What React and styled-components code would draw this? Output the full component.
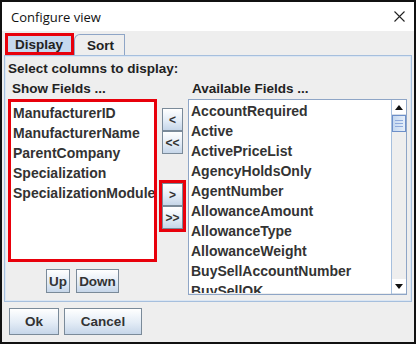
import styled, { createGlobalStyle } from 'styled-components';

const GlobalStyle = createGlobalStyle`
    body {
        margin: 0;
        background: #ffffff;
        font-family: 'Liberation Sans', Arial, sans-serif;
    }
`;

const showFields = [
    'ManufacturerID',
    'ManufacturerName',
    'ParentCompany',
    'Specialization',
    'SpecializationModule',
];

const availableFields = [
    'AccountRequired',
    'Active',
    'ActivePriceList',
    'AgencyHoldsOnly',
    'AgentNumber',
    'AllowanceAmount',
    'AllowanceType',
    'AllowanceWeight',
    'BuySellAccountNumber',
    'BuySellOK',
];

function App() {
    return (
        <>
            <GlobalStyle />
            <Dialog>
                <TitleBar>
                    <span>Configure view</span>
                    <svg width='11' height='11' viewBox='0 0 11 11'>
                        <path d='M0.5 0.5 L10.5 10.5 M10.5 0.5 L0.5 10.5' stroke='#222' strokeWidth='1.1' />
                    </svg>
                </TitleBar>
                <Body>
                    <TabRow>
                        <Highlight>
                            <Tab $active>Display</Tab>
                        </Highlight>
                        <Tab>Sort</Tab>
                    </TabRow>
                    <Panel>
                        <Heading>Select columns to display:</Heading>
                        <Columns>
                            <LeftColumn>
                                <Label>Show Fields ...</Label>
                                <Highlight>
                                    <List $height={156}>
                                        {showFields.map((f) => (
                                            <Item key={f}>{f}</Item>
                                        ))}
                                    </List>
                                </Highlight>
                                <ButtonRow>
                                    <Button $w={24}>Up</Button>
                                    <Button $w={43}>Down</Button>
                                </ButtonRow>
                            </LeftColumn>
                            <MiddleColumn>
                                <ArrowGroup>
                                    <ArrowButton>&lt;</ArrowButton>
                                    <ArrowButton>&lt;&lt;</ArrowButton>
                                </ArrowGroup>
                                <Highlight>
                                    <ArrowGroup>
                                        <ArrowButton>&gt;</ArrowButton>
                                        <ArrowButton>&gt;&gt;</ArrowButton>
                                    </ArrowGroup>
                                </Highlight>
                            </MiddleColumn>
                            <RightColumn>
                                <Label>Available Fields ...</Label>
                                <ScrollBox>
                                    <List $height={192} $plain>
                                        {availableFields.map((f) => (
                                            <Item key={f}>{f}</Item>
                                        ))}
                                    </List>
                                    <ScrollBar>
                                        <ScrollArrow>
                                            <svg width='8' height='5' viewBox='0 0 8 5'>
                                                <path d='M0 5 L4 0 L8 5 Z' fill='#111' />
                                            </svg>
                                        </ScrollArrow>
                                        <Thumb>
                                            <Grip />
                                            <Grip />
                                            <Grip />
                                        </Thumb>
                                        <Track />
                                        <ScrollArrow>
                                            <svg width='8' height='5' viewBox='0 0 8 5'>
                                                <path d='M0 0 L8 0 L4 5 Z' fill='#111' />
                                            </svg>
                                        </ScrollArrow>
                                    </ScrollBar>
                                </ScrollBox>
                            </RightColumn>
                        </Columns>
                    </Panel>
                    <Footer>
                        <Button $w={50} $h={27}>Ok</Button>
                        <Button $w={78} $h={27}>Cancel</Button>
                    </Footer>
                </Body>
            </Dialog>
        </>
    );
}

const Dialog = styled.div`
    width: 416px;
    height: 344px;
    box-sizing: border-box;
    border: 2px solid #111;
    display: flex;
    flex-direction: column;
    background: #eeeeee;
`;

const TitleBar = styled.div`
    height: 29px;
    flex-shrink: 0;
    background: #ffffff;
    display: flex;
    align-items: center;
    justify-content: space-between;
    padding: 0 9px 0 9px;
    font-family: 'Open Sans', 'Liberation Sans', sans-serif;
    font-size: 13px;
    color: #111;
`;

const Body = styled.div`
    flex: 1;
    display: flex;
    flex-direction: column;
    padding: 2px 1px 0 1px;
    font-weight: bold;
    color: #333333;
    font-size: 13px;
`;

const TabRow = styled.div`
    display: flex;
    align-items: flex-end;
    height: 22px;
    flex-shrink: 0;
    padding-left: 2px;
`;

const Highlight = styled.div`
    border: 3px solid #e8000b;
    display: flex;
    flex-direction: column;
`;

const Tab = styled.div`
    height: ${(p) => (p.$active ? '16px' : '20px')};
    display: flex;
    align-items: center;
    padding: 0 ${(p) => (p.$active ? '8px' : '10px')} 0 ${(p) => (p.$active ? '7px' : '12px')};
    background: ${(p) => (p.$active ? '#c5d8ee' : '#eeeeee')};
    border: ${(p) => (p.$active ? 'none' : '1px solid #8ea5c6')};
    border-bottom: none;
    border-top-left-radius: ${(p) => (p.$active ? '0' : '6px 6px')};
    font-size: 13.5px;
    color: #222;
`;

const Panel = styled.div`
    height: 247px;
    flex-shrink: 0;
    box-sizing: border-box;
    margin: 0 1px;
    border: 1px solid #a6bfdd;
    box-shadow: inset 0 0 0 1px #dbe6f3;
    padding: 6px 0 0 3px;
    display: flex;
    flex-direction: column;
`;

const Heading = styled.div`
    font-size: 13.5px;
    color: #222;
    height: 19px;
    line-height: 14px;
`;

const Columns = styled.div`
    display: flex;
`;

const LeftColumn = styled.div`
    width: 149px;
    display: flex;
    flex-direction: column;
    align-items: stretch;
`;

const Label = styled.div`
    height: 18px;
    line-height: 16px;
    padding-left: 4px;
    font-size: 13.5px;
    color: #222;
`;

const List = styled.div`
    height: ${(p) => p.$height}px;
    flex-shrink: 0;
    background: #ffffff;
    padding: 1px 0 0 2px;
    overflow: hidden;
    flex-grow: ${(p) => (p.$plain ? 1 : 0)};
`;

const Item = styled.div`
    height: 20px;
    line-height: 20px;
    white-space: nowrap;
    font-size: 14px;
    color: #333;
`;

const ButtonRow = styled.div`
    display: flex;
    justify-content: center;
    gap: 6px;
    margin-top: 7px;
`;

const Button = styled.div`
    width: ${(p) => p.$w}px;
    height: ${(p) => p.$h || 24}px;
    box-sizing: border-box;
    border: 1px solid #7a8a99;
    background: linear-gradient(#ffffff, #e3ecf6 55%, #c6d6e9);
    display: flex;
    align-items: center;
    justify-content: center;
    color: #333;
    font-size: 13.5px;
`;

const MiddleColumn = styled.div`
    width: 31px;
    display: flex;
    flex-direction: column;
    align-items: center;
    padding-top: 27px;
    gap: 26px;
`;

const ArrowGroup = styled.div`
    display: flex;
    flex-direction: column;
`;

const ArrowButton = styled(Button)`
    width: 21px;
    height: 23px;
    font-size: 12px;
`;

const RightColumn = styled.div`
    width: 219px;
    display: flex;
    flex-direction: column;
`;

const ScrollBox = styled.div`
    display: flex;
    border: 1px solid #8ea5c6;
    height: 194px;
`;

const ScrollBar = styled.div`
    width: 14px;
    display: flex;
    flex-direction: column;
    border-left: 1px solid #a6bfdd;
    background: #eeeeee;
`;

const ScrollArrow = styled.div`
    height: 14px;
    background: #ffffff;
    border-bottom: 1px solid #d4dde8;
    display: flex;
    align-items: center;
    justify-content: center;
`;

const Thumb = styled.div`
    height: 15px;
    border: 1px solid #6d8fc9;
    background: linear-gradient(90deg, #c4d8f0, #e6effa);
    display: flex;
    flex-direction: column;
    justify-content: center;
    align-items: center;
    gap: 2px;
`;

const Grip = styled.div`
    width: 8px;
    height: 1px;
    background: #8eaadc;
`;

const Track = styled.div`
    flex: 1;
`;

const Footer = styled.div`
    display: flex;
    gap: 5px;
    padding: 6px 0 0 6px;
`;

export default App;
